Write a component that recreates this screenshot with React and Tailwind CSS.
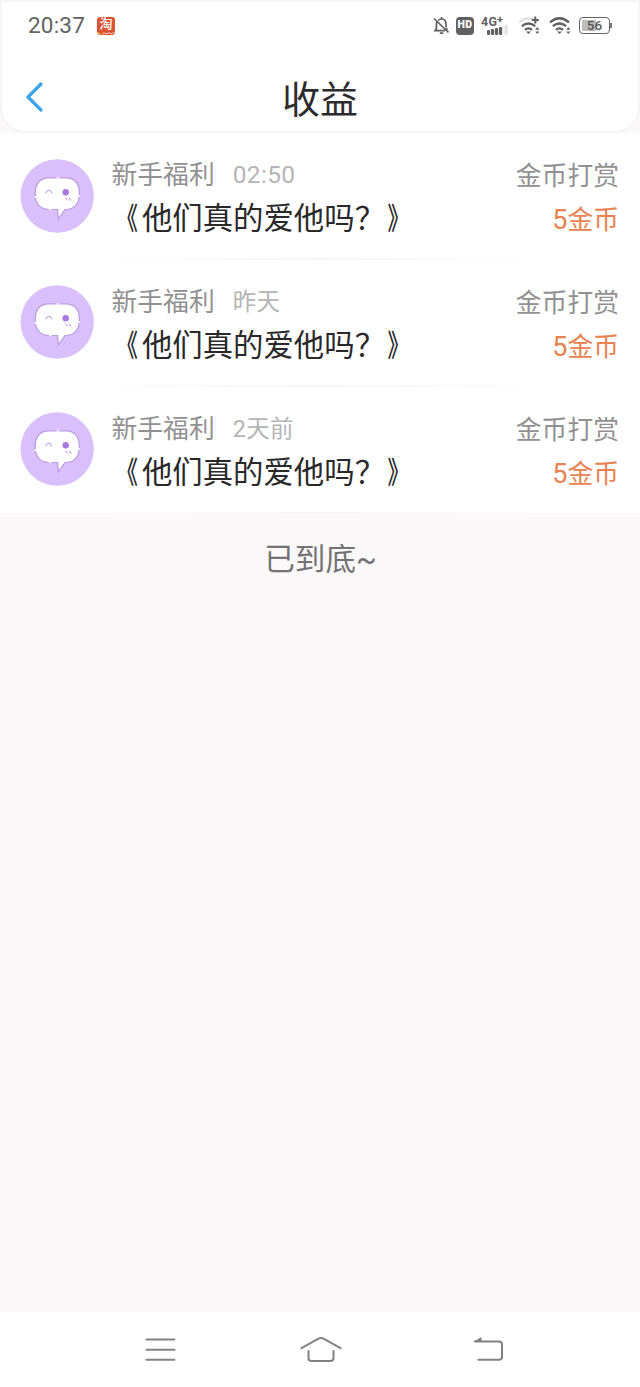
const records = [
  { id: 1, time: '02:50' },
  { id: 2, time: '昨天' },
  { id: 3, time: '2天前' },
];

function Avatar() {
  return (
    <svg className="mt-[25.5px] h-[74px] w-[74px] shrink-0" viewBox="0 0 74 74" fill="none">
      <circle cx="37.2" cy="37" r="36.7" fill="#d9c0fd" />
      <path
        d="M28.5 18.8H46C54.5 18.8 59.3 24.5 59.3 33.5V36C59.3 44.5 54 50.5 46 50.5H45L38.3 59.8L37.6 50.5H28.5C20.5 50.5 15.3 44.5 15.3 36V33.5C15.3 24.5 20.5 18.8 28.5 18.8Z"
        fill="#fff" stroke="#bb99e4" strokeWidth="1.2"
      />
      <path d="M36.5 18.8h3M15.4 37v2M59.2 36v2M29 50.5h2.5" stroke="#fff" strokeWidth="1.2" />
      <path d="M25.8 34.3Q26.2 31.3 28.8 31.3Q31.3 31.3 31.8 34.3" stroke="#b996df" strokeWidth="1" />
      <circle cx="45.7" cy="33.3" r="3.2" fill="#aa79df" />
      <path d="M45.5 38.7l2 2.6M49 38.9l2.2 2.6" stroke="#b58adf" strokeWidth="1" />
    </svg>
  );
}

function Wifi({ plus }) {
  return (
    <svg className="h-[20px] w-[23px]" viewBox="0 0 23 20" fill="none" stroke="#606060" strokeWidth="2.3">
      <path d="M1 6.3Q10.5-1.7 20 6.3" stroke={plus ? '#e2e2e2' : '#606060'} />
      <path d="M3.8 10.2Q10.5 4.8 17.2 10.2" />
      <path d="M6.9 13.8Q10.5 11 14.1 13.8" />
      <path d="M8 15.5h5L10.5 18Z" fill="#606060" stroke="none" />
      {plus && <path d="M17.3 0.5v7M13.8 4h7" strokeWidth="2" />}
      <path d="M17.2 13.7h4.2l-2.1-2.6ZM17.2 15.5h4.2l-2.1 2.6Z" fill="#606060" stroke="none" />
    </svg>
  );
}

function StatusBar() {
  return (
    <div className="flex h-[47px] items-center pl-[26px] pr-[26px] font-['Roboto','Noto_Sans_CJK_SC',sans-serif]">
      <span className="w-[69px] text-[22.5px] leading-none tracking-[0.2px] text-[#626262]">20:37</span>
      <span className="flex h-[18px] w-[18px] flex-col items-center overflow-hidden rounded-[3px] bg-[#dc5331] text-[13px] font-medium leading-[14px] text-white">
        淘
        <svg className="h-[4px] w-[18px] shrink-0" viewBox="0 0 18 4">
          <path d="M0 1l2 .5 2 2.5H0Z" fill="#f3bd52" />
          <path d="M5 3.4l2-1.6 2 1 3-1 2 1 4-1.6" fill="none" stroke="#f8d8cb" strokeWidth="0.9" />
        </svg>
      </span>
      <div className="ml-auto flex items-center">
        <svg className="h-[18px] w-[17px]" viewBox="0 0 17 18" fill="none" stroke="#606060" strokeWidth="1.7">
          <path d="M6.2 3.3Q7.5 2 9.5 2Q14 2 14 7V10.3M4.8 5Q4.4 6 4.4 7V11.7L3 13.7H13M2 1.5L16.5 15.5M9.5 0v2M7.8 16.2h3.4M14 11l1.5 1.8" />
        </svg>
        <span className="ml-[7px] mr-[-1px] flex h-[18px] w-[18px] items-center justify-center rounded-[4px] bg-[#606060]">
          <span className="text-[10.5px] font-black leading-none tracking-[0.5px] text-white">HD</span>
        </span>
        <div className="relative ml-[7px] h-[20px] w-[29px]">
          <span className="absolute left-[1px] top-0 text-[12.5px] font-bold leading-[12px] tracking-[0.3px] text-[#606060]">4G<span className="absolute -top-[2px] left-[16px] text-[11px]">+</span></span>
          <svg className="absolute bottom-0 left-[7px] h-[11px] w-[22px]" viewBox="0 0 22 11" fill="#606060">
            <rect y="5" width="3.2" height="5" rx="1" />
            <rect x="4" y="4" width="3.2" height="6" rx="1" />
            <rect x="8" y="3" width="3.2" height="7" rx="1" />
            <rect x="12" y="2" width="3.2" height="8" rx="1" />
            <rect x="17.5" y="0" width="3.2" height="10" rx="1" fill="#e3e3e3" />
          </svg>
        </div>
        <span className="ml-[9px] flex"><Wifi plus /></span>
        <span className="ml-[8px] flex"><Wifi /></span>
        <div className="ml-[7px] flex items-center">
          <div className="flex h-[17px] w-[31px] items-center justify-center rounded-[4px] border-[1.5px] border-[#646464] bg-linear-to-r from-[#bdbdbd] from-56% to-white to-56% bg-clip-content p-[2px] text-[13.5px] font-medium leading-none text-[#555]">
            56
          </div>
          <div className="h-[5px] w-[2px] bg-[#777]" />
        </div>
      </div>
    </div>
  );
}

function Record({ time }) {
  return (
    <article className="relative flex h-[126.8px] bg-white pl-[20px] pr-[21px]">
      <Avatar />
      <div className="ml-[17.5px] flex-1 pt-[24px]">
        <div className="flex items-center whitespace-nowrap leading-[36px]">
          <span className="text-[25.8px] text-[#919191]">新手福利</span>
          <span className="ml-[18px] text-[23.5px] tracking-[0.3px] text-[#b5b5b5]">
            {time.includes(':') ? <span className="text-[24.5px] tracking-[0.35px]">{time}</span> : time}
          </span>
        </div>
        <h2 className="mt-[6px] whitespace-nowrap text-[30.4px] font-normal leading-[40px] text-[#292929]">
          <span className="inline-block origin-right -translate-x-[4.5px] scale-x-[0.72] font-medium">《</span>他们真的爱他吗？<span className="inline-block origin-left translate-x-[2.5px] scale-x-[0.72] font-medium">》</span>
        </h2>
      </div>
      <div className="flex flex-col items-end pt-[25px] text-[25.8px] leading-[36px]">
        <span className="text-[#919191]">金币打赏</span>
        <span className="mt-[8px] text-[#e88250]"><span className="text-[27px]">5</span>金币</span>
      </div>
      <div className="absolute bottom-0 left-[90px] right-[90px] h-[1.5px] bg-linear-to-r from-white via-[#f5f5f5] to-white" />
    </article>
  );
}

export default function App() {
  return (
    <main className="flex h-[1387px] w-[640px] flex-col overflow-hidden bg-[#faf8f9] font-['Roboto','Noto_Sans_CJK_SC',sans-serif]">
      <header className="h-[133px] rounded-b-[26px] border-2 border-[#f5f5f5] bg-white">
        <StatusBar />
        <div className="grid h-[82px] grid-cols-[1fr_auto_1fr] items-center">
          <svg className="ml-[21.5px] mt-[13px] h-[32px] w-[20px]" viewBox="0 0 20 32" fill="none">
            <path d="M17 3L4 16L17 29" stroke="#38a5ea" strokeWidth="3.2" strokeLinecap="round" strokeLinejoin="round" />
          </svg>
          <h1 className="mt-[19px] text-[38px] font-normal leading-[48px] text-[#2c2c2c]">收益</h1>
        </div>
      </header>
      <section>
        {records.map((record) => <Record key={record.id} time={record.time} />)}
      </section>
      <p className="mt-[25.5px] pl-[1px] text-center text-[30.6px] leading-[42px] text-[#747374]">已到底~</p>
      <nav className="mt-auto flex h-[75px] items-center bg-white pl-[140px]">
        <svg className="h-[40px] w-[40px]" viewBox="0 0 40 40" fill="none" stroke="#828282" strokeWidth="2" strokeLinecap="round">
          <path d="M6.5 9.5h28M6.5 19.7h28M6.5 29.8h28" />
        </svg>
        <svg className="ml-[118.5px] h-[40px] w-[44px]" viewBox="0 0 44 40" fill="none" stroke="#828282" strokeWidth="2" strokeLinecap="round">
          <path d="M2.5 18.2L19.5 8.7Q22 7.3 24.5 8.7L41.5 18.2M9.5 21v7Q9.5 31 12.5 31h19Q34.5 31 34.5 28v-7" />
        </svg>
        <svg className="ml-[125.5px] h-[40px] w-[40px]" viewBox="0 0 40 40" fill="none" stroke="#828282" strokeWidth="2" strokeLinecap="round">
          <path d="M7 11.5H31Q34 11.5 34 14.5V27Q34 29.8 31 29.8H10.5" />
          <path d="M5 12L13.5 7v5Z" fill="#828282" stroke="none" />
        </svg>
      </nav>
    </main>
  );
}
